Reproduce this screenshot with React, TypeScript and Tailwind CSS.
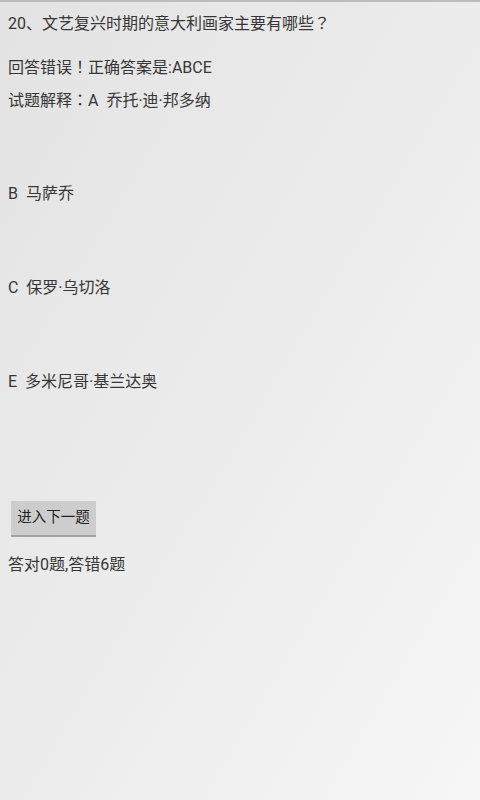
const Punct = ({ c }: { c: string }) => (
  <span className="leading-[0px]" style={{ fontFamily: '"Noto Sans CJK TC", sans-serif' }}>
    {c}
  </span>
)

const items = ['B  马萨乔', 'C  保罗·乌切洛', 'E  多米尼哥·基兰达奥']

export default function App() {
  return (
    <div
      className="h-[800px] w-[480px] overflow-hidden border-t-2 border-[#bcbcbc] bg-gradient-to-br from-[#e3e3e3] via-[#ececec] to-[#f6f6f6] text-[#363636]"
      style={{ fontFamily: 'Roboto, "Noto Sans CJK SC", sans-serif' }}
    >
      <div className="px-2">
        <p className="mt-[11.5px] h-[19px] text-[16px] leading-[19px]">
          20、文艺复兴时期的意大利画家主要有哪些<Punct c="？" />
        </p>
        <p className="mt-[25px] h-[19px] text-[16px] leading-[19px]">
          回答错误<Punct c="！" />正确答案是:ABCE
        </p>

        <div className="mt-[15px] whitespace-pre-wrap text-[16px] leading-[18.8px]">
          <p className="h-[18.8px]">
            试题解释<Punct c="：" />A  乔托·迪·邦多纳
          </p>
          {items.map((t) => (
            <p key={t} className="mt-[75.2px]">
              {t}
            </p>
          ))}
        </div>

        <button className="ml-[3px] mt-[109px] flex h-[36px] w-[85px] items-center justify-center border-b-2 border-[#a3a3a3] bg-[#cdcdcd] text-[14.5px] text-[#222222]">
          进入下一题
        </button>

        <p className="mt-[17.5px] text-[16px] leading-[19px]">答对0题,答错6题</p>
      </div>
    </div>
  )
}
